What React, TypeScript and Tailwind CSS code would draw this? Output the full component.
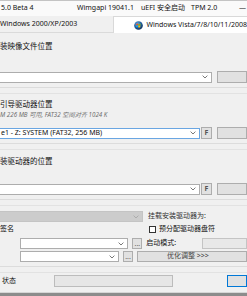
import React from 'react';

const font = { fontFamily: '"Noto Sans", "Noto Sans CJK SC", sans-serif' };

function Chevron({ light }: { light?: boolean }) {
  return (
    <svg width="6" height="4" viewBox="0 0 6 4" className="shrink-0">
      <path d="M0.6 0.6 L3 3 L5.4 0.6" fill="none" stroke={light ? '#a8a8a8' : '#6a6a6a'} strokeWidth="0.9" />
    </svg>
  );
}

function Combo({
  className,
  text,
}: {
  className: string;
  text?: string;
}) {
  return (
    <div className={`flex h-full items-center justify-between pr-[3px] ${className}`}>
      <span className="whitespace-nowrap pl-px">{text}</span>
      <Chevron light={className.includes('bg-[#cccccc]')} />
    </div>
  );
}

function Btn({ className, children }: { className: string; children?: React.ReactNode }) {
  return (
    <div className={`flex h-full shrink-0 items-center border border-[#adadad] bg-[#e1e1e1] ${className}`}>
      {children}
    </div>
  );
}

function Divider({ mt }: { mt: string }) {
  return (
    <div className={`${mt} shrink-0`}>
      <div className="h-px bg-[#dcdcdc]" />
      <div className="mt-[5px] h-px bg-[#e2e2e2]" />
    </div>
  );
}

function VistaIcon() {
  return (
    <svg width="9" height="9" viewBox="0 0 10 10" className="shrink-0">
      <defs>
        <radialGradient id="orb" cx="0.4" cy="0.35" r="0.7">
          <stop offset="0" stopColor="#6fb0e8" />
          <stop offset="0.6" stopColor="#1f5d9c" />
          <stop offset="1" stopColor="#0c2a4d" />
        </radialGradient>
      </defs>
      <circle cx="5" cy="5" r="4.8" fill="url(#orb)" />
      <path d="M2.6 3.1 Q3.6 2.6 4.7 3 L4.5 4.8 Q3.5 4.4 2.4 4.9 Z" fill="#f25022" />
      <path d="M5 3.1 Q6.1 3.5 7.4 3 L7.2 4.8 Q6 5.3 4.8 4.9 Z" fill="#7fba00" />
      <path d="M2.3 5.2 Q3.4 4.7 4.4 5.1 L4.2 6.9 Q3.2 6.5 2.1 7 Z" fill="#00a4ef" />
      <path d="M4.8 5.2 Q6 5.6 7.1 5.1 L6.9 6.9 Q5.8 7.4 4.6 7 Z" fill="#ffb900" />
    </svg>
  );
}

export default function App() {
  return (
    <div
      className="flex h-[296px] w-[247px] flex-col overflow-hidden bg-[#f0f0f0] text-[7px] text-[#111]"
      style={font}
    >
      <div className="h-px shrink-0 bg-[#c4c4c4]" />

      {/* title bar */}
      <div className="flex h-[15px] shrink-0 items-center whitespace-nowrap bg-[#fafafa]">
        <span className="ml-px w-[76px]">5.0 Beta 4</span>
        <span className="w-[64px]">Wimgapi 19041.1</span>
        <span className="w-[50px]">uEFI 安全启动</span>
        <span className="w-[48px]">TPM 2.0</span>
        <span className="text-[#333]">—</span>
      </div>

      {/* tabs */}
      <div className="flex h-[17px] shrink-0 items-stretch whitespace-nowrap border-b border-[#dadada]">
        <div className="flex w-[116px] items-center">
          <span>Windows 2000/XP/2003</span>
        </div>
        <div className="-mb-px flex flex-1 items-center gap-[3px] border-l border-t border-[#d9d9d9] bg-white pl-[20px]">
          <VistaIcon />
          <span>Windows Vista/7/8/10/11/2008</span>
        </div>
      </div>

      {/* image location */}
      <div className="mt-[9px] flex h-[10px] shrink-0 items-center whitespace-nowrap text-[7.5px]">
        <span>装映像文件位置</span>
      </div>
      <div className="mt-[19px] flex h-[12px] shrink-0 items-center">
        <div className="-ml-px h-[11px] w-[217px]">
          <Combo className="border border-[#adadad] bg-white" />
        </div>
        <Btn className="ml-[5px] w-[30px]" />
      </div>

      <Divider mt="mt-[4px]" />

      {/* boot drive */}
      <div className="mt-[6px] flex h-[10px] shrink-0 items-center whitespace-nowrap text-[7.5px]">
        <span>引导驱动器位置</span>
      </div>
      <div className="flex h-[9px] shrink-0 items-center whitespace-nowrap text-[6.2px] italic text-[#6e6e6e]">
        <span>M 226 MB 可用, FAT32 空间对齐 1024 K</span>
      </div>
      <div className="mt-[8px] flex h-[12px] shrink-0 items-center">
        <div className="-ml-px h-[11px] w-[206px]">
          <Combo className="border border-[#6aa6e2] bg-white" text="e1 - Z: SYSTEM (FAT32, 256 MB)" />
        </div>
        <Btn className="ml-[1px] w-[11px] justify-center font-bold text-[#555]">F</Btn>
        <Btn className="ml-[5px] w-[30px]" />
      </div>

      <Divider mt="mt-[4px]" />

      {/* install drive */}
      <div className="mt-[7px] flex h-[10px] shrink-0 items-center whitespace-nowrap text-[7.5px]">
        <span>装驱动器的位置</span>
      </div>
      <div className="mt-[16px] flex h-[12px] shrink-0 items-center">
        <div className="-ml-px h-[11px] w-[206px]">
          <Combo className="border border-[#adadad] bg-white" />
        </div>
        <Btn className="ml-[1px] w-[11px] justify-center font-bold text-[#555]">F</Btn>
        <Btn className="ml-[5px] w-[30px]" />
      </div>

      <Divider mt="mt-[4px]" />

      {/* options */}
      <div className="mt-[5px] flex h-[11px] shrink-0 items-center whitespace-nowrap">
        <div className="-ml-px h-[11px] w-[144px]">
          <Combo className="border border-[#c4c4c4] bg-[#cccccc]" />
        </div>
        <span className="ml-[5px] text-[#333]">挂载安装驱动器为:</span>
      </div>
      <div className="mt-[2px] flex h-[10px] shrink-0 items-center whitespace-nowrap">
        <span className="w-[149px]">签名</span>
        <div className="h-[7px] w-[7px] border border-[#333] bg-white" />
        <span className="ml-[3px]">预分配驱动器盘符</span>
      </div>
      <div className="mt-[4px] flex h-[11px] shrink-0 items-center whitespace-nowrap">
        <div className="ml-[20px] h-[11px] w-[111px]">
          <Combo className="border border-[#adadad] bg-white" />
        </div>
        <Btn className="ml-[4px] w-[10px] items-end justify-center pb-px leading-none text-[#666]">...</Btn>
        <span className="ml-[4px] w-[57px]">启动模式:</span>
        <div className="h-[11px] w-[45px] shrink-0 border border-[#c4c4c4] bg-[#e8e8e8]" />
      </div>
      <div className="mt-[2px] flex h-[11px] shrink-0 items-center whitespace-nowrap">
        <div className="ml-[20px] h-[11px] w-[111px]">
          <Combo className="border border-[#adadad] bg-white" />
        </div>
        <Btn className="ml-[4px] w-[10px] items-end justify-center pb-px leading-none text-[#666]">...</Btn>
        <Btn className="ml-[4px] w-[110px] pl-[29px] text-[#444]">优化调整 &gt;&gt;&gt;</Btn>
      </div>

      <Divider mt="mt-[4px]" />

      {/* status */}
      <div className="mt-[2px] flex h-[12px] shrink-0 items-center whitespace-nowrap">
        <span className="ml-[2px] w-[68px]">状态</span>
        <div className="h-[12px] w-[119px] shrink-0 border border-[#bcbcbc] bg-[#e6e6e6]" />
        <div className="ml-[54px] h-[12px] w-[20px] shrink-0 border border-[#0078d7] bg-[#e1e1e1]" />
      </div>

      <div className="flex-1" />
      <div className="h-px shrink-0 bg-[#d6d6d6]" />
      <div className="h-[3px] shrink-0 bg-[#8c8c8c]" />
    </div>
  );
}
